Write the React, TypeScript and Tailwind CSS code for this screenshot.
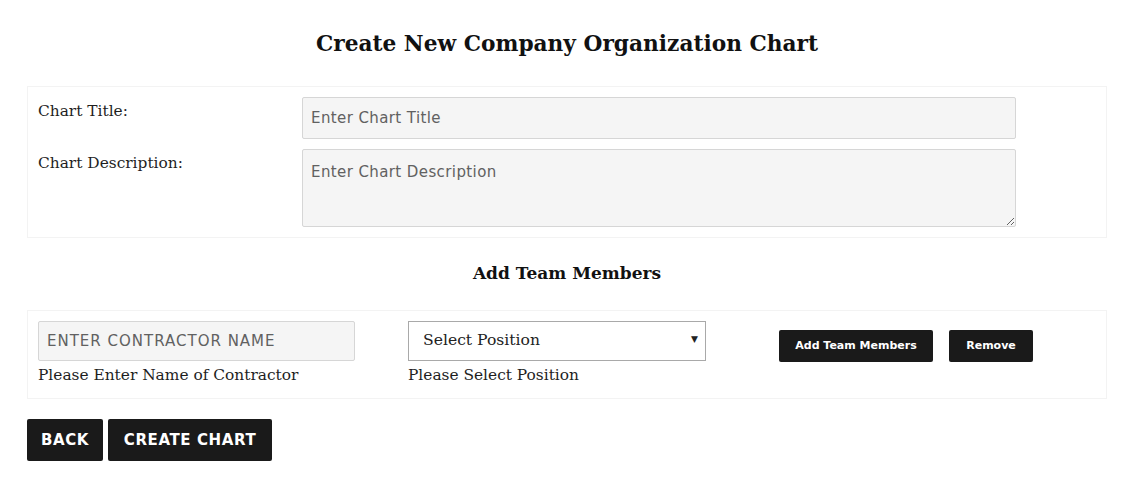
export default function App() {
    const serif = "font-['DejaVu_Serif',serif]";
    const sans = "font-['DejaVu_Sans',sans-serif]";

    return (
        <div className={`min-h-[487px] w-full bg-white px-[27px] pt-[28px] text-[#1e1e1e] ${serif}`}>
            <h1 className="text-center text-[21.7px] font-bold leading-[32px] text-[#111]">
                Create New Company Organization Chart
            </h1>

            {/* Chart details */}
            <div className="mt-[26px] flex flex-col gap-[10px] border border-[#f3f3f3] px-[10px] pt-[10px] pb-[10px]">
                <div className="flex">
                    <label className="w-[264px] pt-[3px] text-[15.4px] leading-[22px]">Chart Title:</label>
                    <input
                        placeholder="Enter Chart Title"
                        className={`h-[42px] w-[714px] rounded-[2px] border border-[#d6d6d6] bg-[#f5f5f5] px-[8px] text-[15px] tracking-[0.4px] text-[#555] placeholder:text-[#616161] outline-none ${sans}`}
                    />
                </div>
                <div className="flex">
                    <label className="w-[264px] pt-[3px] text-[15.4px] leading-[22px]">Chart Description:</label>
                    <textarea
                        placeholder="Enter Chart Description"
                        className={`h-[78px] w-[714px] rounded-[2px] border border-[#d6d6d6] bg-[#f5f5f5] px-[8px] pt-[12px] text-[15px] leading-[20px] tracking-[0.4px] text-[#555] placeholder:text-[#616161] outline-none ${sans}`}
                    />
                </div>
            </div>

            <h2 className="mt-[22px] text-center text-[17px] font-bold leading-[26px] text-[#111]">
                Add Team Members
            </h2>

            {/* Team member row */}
            <div className="mt-[24px] flex items-start border border-[#f3f3f3] px-[10px] pt-[10px] pb-[12px]">
                <div className="flex w-[370px] flex-col">
                    <input
                        placeholder="ENTER CONTRACTOR NAME"
                        className={`h-[40px] w-[317px] rounded-[2px] border border-[#d6d6d6] bg-[#f5f5f5] px-[8px] text-[15px] tracking-[1px] text-[#555] placeholder:text-[#616161] outline-none ${sans}`}
                    />
                    <span className="mt-[3px] text-[15.4px] leading-[22px]">Please Enter Name of Contractor</span>
                </div>
                <div className="flex w-[371px] flex-col">
                    <div className="relative h-[40px] w-[298px]">
                        <select className="h-full w-full appearance-none border border-[#a9a9a9] bg-white pl-[14px] text-[15.6px] text-[#222] outline-none">
                            <option>Select Position</option>
                        </select>
                        <span className="pointer-events-none absolute right-[8px] top-[12px] text-[9px] text-[#222]">▼</span>
                    </div>
                    <span className="mt-[3px] text-[15.4px] leading-[22px]">Please Select Position</span>
                </div>
                <div className={`mt-[9px] flex gap-[16px] ${sans}`}>
                    <button className="h-[32px] w-[154px] rounded-[2px] bg-[#1a1a1a] text-[11px] font-bold text-white">
                        Add Team Members
                    </button>
                    <button className="h-[32px] w-[84px] rounded-[2px] bg-[#1a1a1a] text-[11px] font-bold text-white">
                        Remove
                    </button>
                </div>
            </div>

            <div className={`mt-[20px] flex gap-[5px] ${sans}`}>
                <button className="h-[42px] w-[76px] rounded-[2px] bg-[#1a1a1a] text-[15px] font-bold uppercase tracking-[0.6px] text-white">
                    Back
                </button>
                <button className="h-[42px] w-[164px] rounded-[2px] bg-[#1a1a1a] text-[15px] font-bold uppercase tracking-[0.6px] text-white">
                    Create Chart
                </button>
            </div>
        </div>
    );
}
